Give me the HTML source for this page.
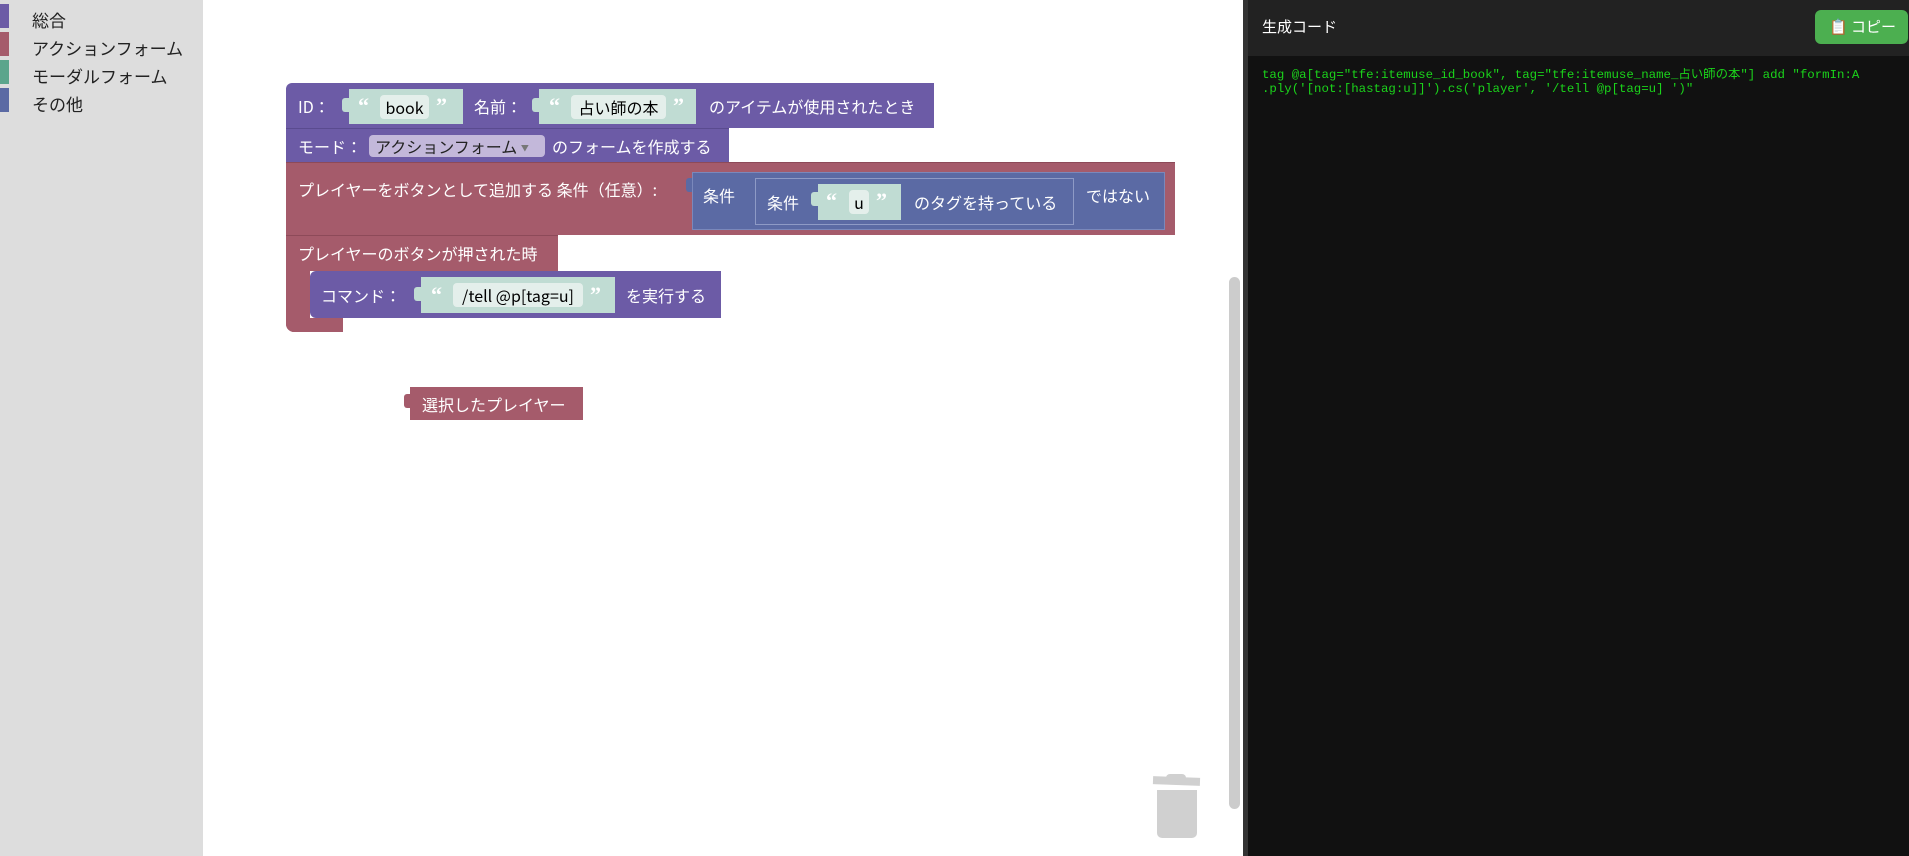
<!DOCTYPE html>
<html><head><meta charset="utf-8"><style>
*{margin:0;padding:0;box-sizing:border-box}
body{width:1909px;height:856px;overflow:hidden;background:#fff;font-family:"Liberation Sans","Noto Sans CJK JP",sans-serif;position:relative}
.a{position:absolute}
.side{left:0;top:0;width:203px;height:856px;background:#ddd}
.bar{left:0;width:9px;height:24px}
.si{left:32px;font-size:17px;color:#222;font-family:"Noto Sans CJK JP",sans-serif;line-height:24px}
.t{color:#fff;font-size:16px;font-family:"Noto Sans CJK JP",sans-serif;line-height:20px;white-space:nowrap}
.p{background:#6c5ba6}
.r{background:#a55b6b}
.b{background:#5b6aa4}
.s{background:#c0dcd3}
.f{background:#e4efeb;border-radius:4px;color:#000;font-size:16px;text-align:center;line-height:24px;height:24px;white-space:nowrap;font-family:"Noto Sans CJK JP",sans-serif}
.q{color:#fff;font-size:22px;font-weight:bold;font-family:"Liberation Serif",serif;line-height:20px}
.tab{width:7px;height:14px;border-radius:3px 0 0 3px}
</style></head><body>
<div class="a side"></div>
<div class="a bar" style="top:4px;background:#6c5ba6"></div>
<div class="a bar" style="top:32px;background:#a55b6b"></div>
<div class="a bar" style="top:60px;background:#5ba58c"></div>
<div class="a bar" style="top:88px;background:#5b6aa4"></div>
<div class="a si" style="top:8px">総合</div>
<div class="a si" style="top:36px">アクションフォーム</div>
<div class="a si" style="top:64px">モーダルフォーム</div>
<div class="a si" style="top:92px">その他</div>

<!-- top block -->
<div class="a p" style="left:286px;top:83px;width:648px;height:45px;border-radius:6px 0 0 0"></div>
<div class="a t" style="left:298px;top:96px">ID：</div>
<div class="a s tab" style="left:342px;top:98px"></div>
<div class="a s" style="left:349px;top:89px;width:114px;height:35px"></div>
<div class="a q" style="left:358px;top:96px">“</div>
<div class="a f" style="left:380px;top:95px;width:49px">book</div>
<div class="a q" style="left:436px;top:96px">”</div>
<div class="a t" style="left:474px;top:96px">名前：</div>
<div class="a s tab" style="left:532px;top:98px"></div>
<div class="a s" style="left:539px;top:89px;width:157px;height:35px"></div>
<div class="a q" style="left:549px;top:96px">“</div>
<div class="a f" style="left:571px;top:95px;width:95px">占い師の本</div>
<div class="a q" style="left:673px;top:96px">”</div>
<div class="a t" style="left:709px;top:96px">のアイテムが使用されたとき</div>

<!-- mode row -->
<div class="a p" style="left:286px;top:128px;width:443px;height:34px;border-top:1px solid #5a4b8f"></div>
<div class="a" style="left:369px;top:135px;width:176px;height:22px;background:#c3b8da;border-radius:4px"></div>
<div class="a t" style="left:298px;top:136px">モード：</div>
<div class="a" style="left:375px;top:136px;font-size:16px;line-height:20px;color:#222;white-space:nowrap;font-family:'Noto Sans CJK JP',sans-serif">アクションフォーム <span style="font-size:8px;color:#777;vertical-align:2px">▼</span></div>
<div class="a t" style="left:552px;top:136px">のフォームを作成する</div>

<!-- condition row -->
<div class="a r" style="left:286px;top:162px;width:889px;height:73px;border-top:1px solid #8d4a59"></div>
<div class="a t" style="left:298px;top:179px">プレイヤーをボタンとして追加する 条件（任意）:</div>
<div class="a b tab" style="left:686px;top:178px"></div>
<div class="a b" style="left:692px;top:172px;width:473px;height:58px;border:1px solid #7a88bb"></div>
<div class="a t" style="left:703px;top:185px">条件</div>
<div class="a b" style="left:755px;top:178px;width:319px;height:47px;border:1px solid #8e9ac6"></div>
<div class="a t" style="left:767px;top:192px">条件</div>
<div class="a s tab" style="left:811px;top:192px"></div>
<div class="a s" style="left:818px;top:184px;width:83px;height:36px"></div>
<div class="a q" style="left:826px;top:191px">“</div>
<div class="a f" style="left:849px;top:190px;width:20px">u</div>
<div class="a q" style="left:876px;top:191px">”</div>
<div class="a t" style="left:914px;top:192px">のタグを持っている</div>
<div class="a t" style="left:1086px;top:185px">ではない</div>

<!-- pressed row -->
<div class="a r" style="left:286px;top:235px;width:272px;height:36px;border-top:1px solid #8d4a59"></div>
<div class="a t" style="left:298px;top:243px">プレイヤーのボタンが押された時</div>
<div class="a r" style="left:286px;top:270px;width:24px;height:62px;border-radius:0 0 0 8px"></div>
<div class="a r" style="left:286px;top:318px;width:57px;height:14px;border-radius:0 0 0 8px"></div>
<div class="a p" style="left:310px;top:271px;width:411px;height:47px;border-radius:6px 0 0 6px"></div>
<div class="a t" style="left:321px;top:285px">コマンド：</div>
<div class="a s tab" style="left:414px;top:287px"></div>
<div class="a s" style="left:421px;top:277px;width:194px;height:36px"></div>
<div class="a q" style="left:431px;top:285px">“</div>
<div class="a f" style="left:453px;top:283px;width:130px">/tell @p[tag=u]</div>
<div class="a q" style="left:590px;top:285px">”</div>
<div class="a t" style="left:626px;top:285px">を実行する</div>

<!-- selected player -->
<div class="a r tab" style="left:404px;top:394px"></div>
<div class="a r" style="left:410px;top:387px;width:173px;height:33px"></div>
<div class="a t" style="left:422px;top:394px">選択したプレイヤー</div>

<!-- scrollbar & trash -->
<div class="a" style="left:1229px;top:277px;width:11px;height:532px;background:#ccc;border-radius:6px"></div>
<div class="a" style="left:1153px;top:777px;width:47px;height:8px;background:#d0d0d0;transform:rotate(2deg)"></div>
<div class="a" style="left:1166px;top:774px;width:20px;height:6px;background:#d0d0d0;border-radius:4px 4px 0 0"></div>
<div class="a" style="left:1157px;top:790px;width:40px;height:48px;background:#d0d0d0;border-radius:0 0 5px 5px"></div>

<!-- right panel -->
<div class="a" style="left:1243px;top:0;width:666px;height:856px;background:#111;border-left:5px solid #333"></div>
<div class="a" style="left:1248px;top:0;width:661px;height:56px;background:#222"></div>
<div class="a" style="left:1262px;top:16px;color:#fff;font-size:15px;font-family:'Noto Sans CJK JP',sans-serif;line-height:22px">生成コード</div>
<div class="a" style="left:1815px;top:10px;width:93px;height:34px;background:#4caf50;border-radius:6px;color:#fff;font-size:15px;line-height:34px;font-family:'Noto Sans CJK JP',sans-serif;padding-left:14px">📋 コピー</div>
<div class="a" style="left:1262px;top:68px;color:#1bd41b;font-size:12.4px;line-height:14px;font-family:'Liberation Mono','Noto Sans CJK JP',monospace;white-space:pre;width:640px;overflow:hidden">tag @a[tag="tfe:itemuse_id_book", tag="tfe:itemuse_name_占い師の本"] add "formIn:A
.ply('[not:[hastag:u]]').cs('player', '/tell @p[tag=u] ')"</div>
</body></html>
